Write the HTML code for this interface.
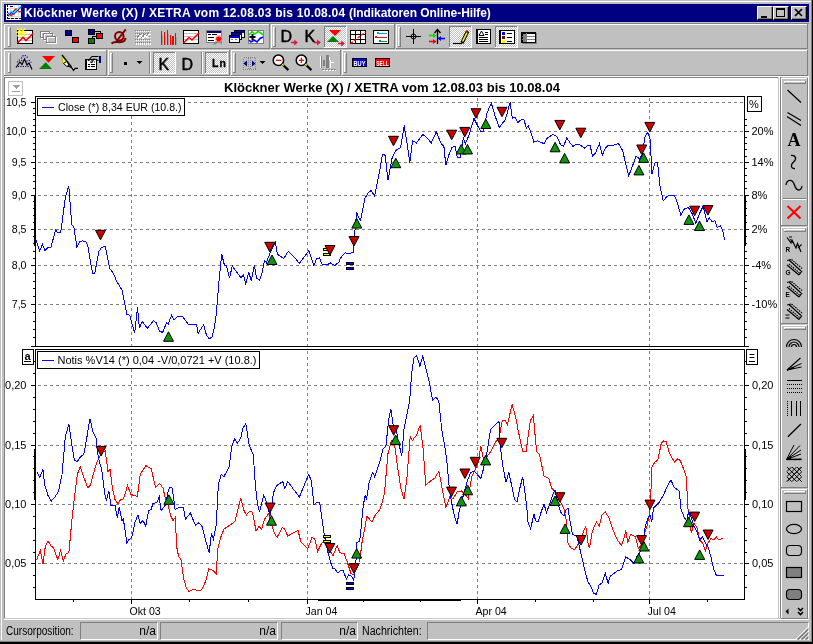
<!DOCTYPE html>
<html lang="de"><head><meta charset="utf-8"><title>Klöckner Werke (X) / XETRA</title>
<style>
html,body{margin:0;padding:0;}
body{width:813px;height:644px;overflow:hidden;background:#c0c0c0;position:relative;font-family:"Liberation Sans",Arial,sans-serif;font-size:11px;color:#000;}
.abs{position:absolute;}
#frame div{position:absolute;}
#title{position:absolute;left:4px;top:4px;width:805px;height:18px;background:#000080;}
#title>span{will-change:transform;position:absolute;left:20px;top:2px;color:#fff;font-weight:bold;font-size:12px;line-height:14px;white-space:nowrap;}
#title .t1{letter-spacing:0.243px;}#title .t2{letter-spacing:-0.06px;}
.tb{position:absolute;top:6px;width:16px;height:14px;background:#c0c0c0;box-sizing:border-box;border:1px solid;border-color:#fff #000 #000 #fff;box-shadow:inset -1px -1px 0 #808080;}
#client{position:absolute;left:4px;top:77px;width:774px;height:541px;background:#fff;border-left:1px solid #808080;border-top:1px solid #808080;box-sizing:border-box;}
#status{will-change:transform;position:absolute;left:4px;top:620px;width:805px;height:21px;}
.sb{position:absolute;top:2px;height:18px;box-sizing:border-box;border:1px solid;border-color:#808080 #fff #fff #808080;text-align:right;padding:2px 1px 0 0;font-size:12px;line-height:13px;}
.sl{position:absolute;top:4px;font-size:12px;line-height:14px;white-space:nowrap;}
svg{position:absolute;left:0;top:0;will-change:transform;}
</style></head><body>
<div id="frame">
<div style="left:0;top:0;width:813px;height:644px;background:#000;"></div>
<div style="left:0;top:0;width:812px;height:642px;background:#808080;"></div>
<div style="left:0;top:0;width:811px;height:641px;background:#c0c0c0;"></div>
<div style="left:1px;top:1px;width:810px;height:1px;background:#fff;"></div>
<div style="left:1px;top:1px;width:1px;height:639px;background:#fff;"></div>
</div>
<div id="title"><span><span class="t1">Klöckner Werke (X) / XETRA vom 12.08.03 bis 10.08.04 </span><span class="t2">(Indikatoren Online-Hilfe)</span></span>
<div class="tb" style="left:753px;top:2px;"></div><div class="tb" style="left:769px;top:2px;"></div><div class="tb" style="left:787px;top:2px;"></div>
</div>
<div id="client"></div>
<div class="abs" style="left:778px;top:77px;width:1px;height:542px;background:#c8c8c8;"></div>
<div class="abs" style="left:779px;top:77px;width:1px;height:542px;background:#fff;"></div>
<div class="abs" style="left:780px;top:77px;width:1px;height:542px;background:#808080;"></div>
<div class="abs" style="left:808px;top:77px;width:1px;height:542px;background:#fff;"></div>
<div class="abs" style="left:4px;top:618px;width:805px;height:1px;background:#c8c8c8;"></div><div class="abs" style="left:4px;top:619px;width:805px;height:1px;background:#fff;"></div>
<div class="abs" style="left:4px;top:76px;width:805px;height:1px;background:#fff;"></div>
<div id="status">
<span class="sl" style="left:2px;transform:scaleX(0.838);transform-origin:0 0;">Cursorposition:</span>
<div class="sb" style="left:76px;width:78px;">n/a</div>
<div class="sb" style="left:156px;width:118px;">n/a</div>
<div class="sb" style="left:277px;width:77px;">n/a</div>
<span class="sl" style="left:358px;transform:scaleX(0.885);transform-origin:0 0;">Nachrichten:</span>
<div class="sb" style="left:423px;width:382px;"></div>
</div>
<svg width="813" height="644" viewBox="0 0 813 644">
<defs><pattern id="chk" width="2" height="2" patternUnits="userSpaceOnUse"><rect width="2" height="2" fill="#c0c0c0"/><rect width="1" height="1" fill="#fff"/><rect x="1" y="1" width="1" height="1" fill="#fff"/></pattern></defs>
<g shape-rendering="crispEdges">
<rect x="4" y="23" width="805" height="1" fill="#808080"/>
<rect x="4" y="24" width="266" height="1" fill="#fff"/><rect x="4" y="24" width="1" height="25" fill="#fff"/><rect x="4" y="48" width="266" height="1" fill="#808080"/><rect x="269" y="24" width="1" height="25" fill="#808080"/>
<rect x="271" y="24" width="124" height="1" fill="#fff"/><rect x="271" y="24" width="1" height="25" fill="#fff"/><rect x="271" y="48" width="124" height="1" fill="#808080"/><rect x="394" y="24" width="1" height="25" fill="#808080"/>
<rect x="396" y="24" width="412" height="1" fill="#fff"/><rect x="396" y="24" width="1" height="25" fill="#fff"/><rect x="396" y="48" width="412" height="1" fill="#808080"/><rect x="807" y="24" width="1" height="25" fill="#808080"/>
<rect x="4" y="50" width="103" height="1" fill="#fff"/><rect x="4" y="50" width="1" height="26" fill="#fff"/><rect x="4" y="75" width="103" height="1" fill="#808080"/><rect x="106" y="50" width="1" height="26" fill="#808080"/>
<rect x="108" y="50" width="122" height="1" fill="#fff"/><rect x="108" y="50" width="1" height="26" fill="#fff"/><rect x="108" y="75" width="122" height="1" fill="#808080"/><rect x="229" y="50" width="1" height="26" fill="#808080"/>
<rect x="231" y="50" width="110" height="1" fill="#fff"/><rect x="231" y="50" width="1" height="26" fill="#fff"/><rect x="231" y="75" width="110" height="1" fill="#808080"/><rect x="340" y="50" width="1" height="26" fill="#808080"/>
<rect x="342" y="50" width="466" height="1" fill="#fff"/><rect x="342" y="50" width="1" height="26" fill="#fff"/><rect x="342" y="75" width="466" height="1" fill="#808080"/><rect x="807" y="50" width="1" height="26" fill="#808080"/>
<rect x="8" y="27" width="1" height="19" fill="#fff"/><rect x="8" y="27" width="2" height="1" fill="#fff"/><rect x="9" y="28" width="1" height="18" fill="#c0c0c0"/><rect x="10" y="27" width="1" height="20" fill="#808080"/><rect x="8" y="46" width="3" height="1" fill="#808080"/>
<rect x="273" y="27" width="1" height="19" fill="#fff"/><rect x="273" y="27" width="2" height="1" fill="#fff"/><rect x="274" y="28" width="1" height="18" fill="#c0c0c0"/><rect x="275" y="27" width="1" height="20" fill="#808080"/><rect x="273" y="46" width="3" height="1" fill="#808080"/>
<rect x="398" y="27" width="1" height="19" fill="#fff"/><rect x="398" y="27" width="2" height="1" fill="#fff"/><rect x="399" y="28" width="1" height="18" fill="#c0c0c0"/><rect x="400" y="27" width="1" height="20" fill="#808080"/><rect x="398" y="46" width="3" height="1" fill="#808080"/>
<rect x="8" y="53" width="1" height="19" fill="#fff"/><rect x="8" y="53" width="2" height="1" fill="#fff"/><rect x="9" y="54" width="1" height="18" fill="#c0c0c0"/><rect x="10" y="53" width="1" height="20" fill="#808080"/><rect x="8" y="72" width="3" height="1" fill="#808080"/>
<rect x="110" y="53" width="1" height="19" fill="#fff"/><rect x="110" y="53" width="2" height="1" fill="#fff"/><rect x="111" y="54" width="1" height="18" fill="#c0c0c0"/><rect x="112" y="53" width="1" height="20" fill="#808080"/><rect x="110" y="72" width="3" height="1" fill="#808080"/>
<rect x="233" y="53" width="1" height="19" fill="#fff"/><rect x="233" y="53" width="2" height="1" fill="#fff"/><rect x="234" y="54" width="1" height="18" fill="#c0c0c0"/><rect x="235" y="53" width="1" height="20" fill="#808080"/><rect x="233" y="72" width="3" height="1" fill="#808080"/>
<rect x="344" y="53" width="1" height="19" fill="#fff"/><rect x="344" y="53" width="2" height="1" fill="#fff"/><rect x="345" y="54" width="1" height="18" fill="#c0c0c0"/><rect x="346" y="53" width="1" height="20" fill="#808080"/><rect x="344" y="72" width="3" height="1" fill="#808080"/>
<rect x="324" y="26" width="23" height="22" fill="url(#chk)"/><rect x="324" y="26" width="23" height="1" fill="#808080"/><rect x="324" y="26" width="1" height="22" fill="#808080"/><rect x="324" y="47" width="23" height="1" fill="#fff"/><rect x="346" y="26" width="1" height="22" fill="#fff"/>
<rect x="449" y="26" width="23" height="22" fill="url(#chk)"/><rect x="449" y="26" width="23" height="1" fill="#808080"/><rect x="449" y="26" width="1" height="22" fill="#808080"/><rect x="449" y="47" width="23" height="1" fill="#fff"/><rect x="471" y="26" width="1" height="22" fill="#fff"/>
<rect x="495" y="26" width="23" height="22" fill="url(#chk)"/><rect x="495" y="26" width="23" height="1" fill="#808080"/><rect x="495" y="26" width="1" height="22" fill="#808080"/><rect x="495" y="47" width="23" height="1" fill="#fff"/><rect x="517" y="26" width="1" height="22" fill="#fff"/>
<rect x="153" y="52" width="23" height="22" fill="url(#chk)"/><rect x="153" y="52" width="23" height="1" fill="#808080"/><rect x="153" y="52" width="1" height="22" fill="#808080"/><rect x="153" y="73" width="23" height="1" fill="#fff"/><rect x="175" y="52" width="1" height="22" fill="#fff"/>
<rect x="205" y="52" width="23" height="22" fill="url(#chk)"/><rect x="205" y="52" width="23" height="1" fill="#808080"/><rect x="205" y="52" width="1" height="22" fill="#808080"/><rect x="205" y="73" width="23" height="1" fill="#fff"/><rect x="227" y="52" width="1" height="22" fill="#fff"/>
<rect x="149" y="52" width="1" height="22" fill="#808080"/><rect x="150" y="52" width="1" height="22" fill="#fff"/>
<rect x="201" y="52" width="1" height="22" fill="#808080"/><rect x="202" y="52" width="1" height="22" fill="#fff"/>
<rect x="17.5" y="30.5" width="15" height="13" fill="#fff" stroke="#000"/>
<rect x="18" y="34" width="14" height="1" fill="#c0c0c0"/><rect x="18" y="37" width="14" height="1" fill="#c0c0c0"/><rect x="18" y="40" width="14" height="1" fill="#c0c0c0"/>
</g>
<polyline points="17.5,43 23,37.5 26,40.5 33,33.5" fill="none" stroke="#ff0000" stroke-width="1.6"/>
<line x1="17.3" y1="28.3" x2="25.3" y2="36.3" stroke="#ffff00" stroke-width="1.5"/><line x1="25.3" y1="28.3" x2="17.3" y2="36.3" stroke="#ffff00" stroke-width="1.5"/><line x1="21.3" y1="27.6" x2="21.3" y2="30.5" stroke="#ffff00" stroke-width="1.3"/><line x1="21.3" y1="34.2" x2="21.3" y2="37" stroke="#ffff00" stroke-width="1.3"/><line x1="16.3" y1="32.3" x2="19.3" y2="32.3" stroke="#ffff00" stroke-width="1.3"/><line x1="23.3" y1="32.3" x2="26.3" y2="32.3" stroke="#ffff00" stroke-width="1.3"/>
<g shape-rendering="crispEdges">
<rect x="40" y="31" width="11" height="8" fill="#c0c0c0"/>
<rect x="41.5" y="32.5" width="9" height="6" fill="none" stroke="#fff"/>
<rect x="40.5" y="31.5" width="9" height="6" fill="none" stroke="#808080"/>
<rect x="43" y="33" width="11" height="8" fill="#c0c0c0"/>
<rect x="44.5" y="34.5" width="9" height="6" fill="none" stroke="#fff"/>
<rect x="43.5" y="33.5" width="9" height="6" fill="none" stroke="#808080"/>
<rect x="46" y="36" width="11" height="8" fill="#c0c0c0"/>
<rect x="47.5" y="37.5" width="9" height="6" fill="none" stroke="#fff"/>
<rect x="46.5" y="36.5" width="9" height="6" fill="none" stroke="#808080"/>
<rect x="65.5" y="30.5" width="6" height="5" fill="#000090" stroke="#000"/>
<rect x="72.5" y="37.5" width="6" height="5" fill="#ff0000" stroke="#000"/>
<polyline points="95,31.5 100.5,31.5 100.5,33" fill="none" stroke="#000" stroke-width="1"/>
<polyline points="97,36.5 92.5,36.5 92.5,38" fill="none" stroke="#000" stroke-width="1"/>
<rect x="88.5" y="29.5" width="6" height="5" fill="#000090" stroke="#000"/>
<rect x="96.5" y="33.5" width="6" height="5" fill="#ff0000" stroke="#000"/>
<rect x="88.5" y="38.5" width="6" height="5" fill="#008000" stroke="#000"/>
</g>
<circle cx="119.3" cy="36.3" r="4.3" fill="none" stroke="#800000" stroke-width="2"/>
<line x1="125.8" y1="29.3" x2="115.5" y2="42.5" stroke="#800000" stroke-width="1.9"/>
<path d="M111.5,43.5 C114,41 118,42.5 121,42 S125,41 125.5,38" fill="none" stroke="#800000" stroke-width="2.1"/>
<g shape-rendering="crispEdges">
<line x1="135" y1="30.5" x2="151" y2="30.5" stroke="#808080" stroke-dasharray="1,1"/>
<line x1="136" y1="31.5" x2="151" y2="31.5" stroke="#fff" stroke-dasharray="1,1"/>
<line x1="135" y1="33.5" x2="151" y2="33.5" stroke="#808080" stroke-dasharray="1,1"/>
<line x1="136" y1="34.5" x2="151" y2="34.5" stroke="#fff" stroke-dasharray="1,1"/>
<line x1="135" y1="36.5" x2="151" y2="36.5" stroke="#808080" stroke-dasharray="1,1"/>
<line x1="136" y1="37.5" x2="151" y2="37.5" stroke="#fff" stroke-dasharray="1,1"/>
<line x1="135" y1="39.5" x2="151" y2="39.5" stroke="#808080" stroke-dasharray="1,1"/>
<line x1="136" y1="40.5" x2="151" y2="40.5" stroke="#fff" stroke-dasharray="1,1"/>
<line x1="135" y1="42.5" x2="151" y2="42.5" stroke="#808080" stroke-dasharray="1,1"/>
<line x1="136" y1="43.5" x2="151" y2="43.5" stroke="#fff" stroke-dasharray="1,1"/>
<polyline points="137,38 140,34 142,38 144,34 146,37 149,32" fill="none" stroke="#808080" stroke-width="1"/>
<polyline points="138,39 141,35 143,39 145,35 147,38 150,33" fill="none" stroke="#fff" stroke-width="1"/>
<line x1="136" y1="44.5" x2="151" y2="44.5" stroke="#fff" stroke-dasharray="1,1"/>
<rect x="161" y="31" width="1.4" height="14" fill="#ff0000"/>
<rect x="162.4" y="35" width="0.6" height="10" fill="#a0a0a0"/>
<rect x="164" y="32" width="1.4" height="13" fill="#ff0000"/>
<rect x="165.4" y="36" width="0.6" height="9" fill="#a0a0a0"/>
<rect x="167" y="30" width="1.4" height="15" fill="#ff0000"/>
<rect x="168.4" y="34" width="0.6" height="11" fill="#a0a0a0"/>
<rect x="169.8" y="35" width="1.4" height="10" fill="#ff0000"/>
<rect x="171.2" y="39" width="0.6" height="6" fill="#a0a0a0"/>
<rect x="172.3" y="36" width="1.4" height="9" fill="#ff0000"/>
<rect x="173.7" y="40" width="0.6" height="5" fill="#a0a0a0"/>
<rect x="174.5" y="33" width="1.4" height="12" fill="#ff0000"/>
<rect x="175.9" y="37" width="0.6" height="8" fill="#a0a0a0"/>
<rect x="183.5" y="30.5" width="15" height="13" fill="#fff" stroke="#000"/>
<rect x="184" y="33" width="14" height="1" fill="#c0c0c0"/><rect x="184" y="36" width="14" height="1" fill="#c0c0c0"/><rect x="184" y="39" width="14" height="1" fill="#c0c0c0"/>
</g>
<polyline points="183.5,43 189,37.5 192,40 199,33" fill="none" stroke="#ff0000" stroke-width="1.6"/>
<g shape-rendering="crispEdges">
<rect x="206.5" y="30.5" width="15" height="12" fill="#fff" stroke="#808080"/>
<rect x="207" y="31" width="14" height="2" fill="#000080"/>
<rect x="208" y="34" width="3" height="1" fill="#000"/><rect x="212" y="34" width="5" height="1" fill="#000"/><rect x="208" y="37" width="6" height="1" fill="#000"/><rect x="208" y="40" width="6" height="1" fill="#000"/>
</g>
<polygon points="216,41 213,45 216,44 218.5,42 221,44 222,45 221,41" fill="#808080" stroke="none"/>
<circle cx="218.7" cy="38.8" r="2.6" fill="#ff0000"/><circle cx="218.7" cy="38.8" r="3.4" fill="none" stroke="#ff9090" stroke-width="0.8"/>
<g shape-rendering="crispEdges">
<rect x="234.5" y="30.5" width="10" height="7" fill="#fff" stroke="#000"/>
<rect x="235" y="31" width="9" height="2" fill="#0000c0"/>
<rect x="231.5" y="32.5" width="10" height="7" fill="#fff" stroke="#000"/>
<rect x="232" y="33" width="9" height="2" fill="#0000c0"/>
<rect x="229.5" y="35.5" width="10" height="7" fill="#fff" stroke="#000"/>
<rect x="230" y="36" width="9" height="2" fill="#0000c0"/>
<rect x="231" y="39" width="2" height="1" fill="#808080"/><rect x="235" y="39" width="2" height="1" fill="#808080"/>
<rect x="248.5" y="30.5" width="15" height="13" fill="#fff" stroke="#808080"/>
</g>
<polyline points="249,35 252,31.5 255,34 258,31.5 261,33 263,35" fill="none" stroke="#00e000" stroke-width="1.6"/>
<polyline points="249,40 251,42 254,40 257,42 260,38.5 263,37" fill="none" stroke="#0000ff" stroke-width="1.6"/>
<rect x="249.5" y="36" width="6" height="2" fill="#000"/><rect x="251.5" y="34" width="2" height="6" fill="#000"/>
<text x="280.5" y="42" font-family="Liberation Sans, Arial, sans-serif" font-size="16px" fill="#000" stroke="#000" stroke-width="0.45">D</text>
<text x="304.5" y="42" font-family="Liberation Sans, Arial, sans-serif" font-size="16px" fill="#000" stroke="#000" stroke-width="0.45">K</text>
<line x1="291" y1="42.5" x2="296" y2="42.5" stroke="#dc143c" stroke-width="1.6"/><polygon points="294.2,39.5 297.8,42.5 294.2,45.5" fill="#dc143c" stroke="none"/>
<line x1="314" y1="42.5" x2="319" y2="42.5" stroke="#dc143c" stroke-width="1.6"/><polygon points="317.2,39.5 320.8,42.5 317.2,45.5" fill="#dc143c" stroke="none"/>
<polygon points="329,30 341,30 335,36" fill="#ff0000" stroke="none"/>
<polygon points="327,42 339,42 333,36" fill="#008000" stroke="none"/>
<line x1="338" y1="43.5" x2="343" y2="43.5" stroke="#dc143c" stroke-width="1.6"/><polygon points="341.2,40.5 344.8,43.5 341.2,46.5" fill="#dc143c" stroke="none"/>
<g shape-rendering="crispEdges">
<rect x="350.5" y="30.5" width="15" height="13" fill="#fff" stroke="#000"/>
<rect x="355" y="30" width="1" height="14" fill="#000"/><rect x="360" y="30" width="1" height="14" fill="#000"/><rect x="350" y="34" width="16" height="1" fill="#000"/><rect x="350" y="39" width="16" height="1" fill="#000"/>
</g>
<line x1="350.5" y1="43.5" x2="365.5" y2="32" stroke="#ff0000" stroke-width="1.3" stroke-dasharray="3,1.5"/>
<g shape-rendering="crispEdges">
<rect x="373.5" y="30.5" width="15" height="13" fill="#fff" stroke="#000"/>
<rect x="378" y="33" width="9" height="1" fill="#00a0e0"/><rect x="377" y="32" width="2" height="2" fill="#00a0e0"/>
<rect x="376" y="37" width="11" height="1" fill="#dc143c"/><rect x="375" y="36" width="2" height="2" fill="#dc143c"/>
<rect x="380" y="41" width="7" height="1" fill="#00a040"/><rect x="379" y="40" width="2" height="2" fill="#00a040"/>
<rect x="406" y="36" width="15" height="1" fill="#000"/><rect x="413" y="29" width="1" height="15" fill="#000"/>
</g>
<circle cx="413.5" cy="36.5" r="2.5" fill="none" stroke="#000" stroke-width="1"/>
<line x1="437.5" y1="29.5" x2="437.5" y2="44" stroke="#000" stroke-width="1.3"/><polyline points="434.5,33 437.5,29.5 440.5,33" fill="none" stroke="#000" stroke-width="1.3"/>
<line x1="429" y1="35.5" x2="435" y2="35.5" stroke="#00e000" stroke-width="1.6"/><polygon points="433,33 436.5,35.5 433,38" fill="#00e000" stroke="none"/>
<line x1="429" y1="41.5" x2="435" y2="41.5" stroke="#ff0000" stroke-width="1.6"/><polygon points="433,39 436.5,41.5 433,44" fill="#ff0000" stroke="none"/>
<line x1="445" y1="38.5" x2="439" y2="38.5" stroke="#0000ff" stroke-width="1.6"/><polygon points="441,36 437.5,38.5 441,41" fill="#0000ff" stroke="none"/>
<line x1="453" y1="43.5" x2="462" y2="43.5" stroke="#000" stroke-width="1.2"/>
<line x1="462" y1="43" x2="467.5" y2="31.5" stroke="#000" stroke-width="3.6"/>
<line x1="462.6" y1="41.5" x2="467" y2="32.5" stroke="#ffff00" stroke-width="1.6"/>
<line x1="466.6" y1="32.2" x2="467.8" y2="30.8" stroke="#c00000" stroke-width="2.5"/>
<g shape-rendering="crispEdges">
<rect x="476.5" y="29.5" width="14" height="14" fill="#fff" stroke="#000"/>
<rect x="476" y="29" width="1.5" height="15" fill="#000"/><rect x="476" y="42.5" width="15" height="1.5" fill="#000"/>
<rect x="479" y="37" width="9" height="1" fill="#000"/><rect x="479" y="39" width="9" height="1" fill="#000"/><rect x="479" y="41" width="9" height="1" fill="#000"/><rect x="485" y="32" width="3" height="1" fill="#000"/><rect x="485" y="34" width="3" height="1" fill="#000"/>
</g>
<polygon points="479,35.5 481.5,31 484,35.5" fill="none" stroke="#000"/>
<g shape-rendering="crispEdges">
<rect x="499.5" y="30.5" width="15" height="13" fill="#fff" stroke="#000"/>
<rect x="499" y="30" width="1.5" height="14" fill="#000"/><rect x="499" y="42.5" width="16" height="1.5" fill="#000"/>
<rect x="502" y="32" width="3" height="3" fill="#0000ff"/><rect x="502" y="36" width="3" height="3" fill="#800000"/><rect x="502" y="40" width="3" height="3" fill="#ffff00"/>
<rect x="507" y="33" width="5" height="1" fill="#000"/><rect x="507" y="37" width="5" height="1" fill="#000"/><rect x="507" y="41" width="5" height="1" fill="#000"/>
<rect x="522" y="33" width="15" height="11" fill="#808080"/>
<rect x="521.5" y="32.5" width="14" height="10" fill="#fff" stroke="#000"/>
<rect x="521" y="32" width="1.5" height="11" fill="#000"/><rect x="521" y="32" width="15" height="1.5" fill="#000"/>
<rect x="522" y="36" width="13" height="1" fill="#808080"/><rect x="522" y="39" width="13" height="1" fill="#808080"/><rect x="526" y="33" width="1" height="9" fill="#808080"/>
<rect x="523" y="34" width="3" height="2" fill="#808080"/><rect x="523" y="37" width="3" height="2" fill="#808080"/><rect x="523" y="40" width="3" height="2" fill="#808080"/>
</g>
<polyline points="16,67.5 20,62 22,64.5 24.5,59 27,65 29,63 32,69.5" fill="none" stroke="#000" stroke-width="1.2"/>
<g fill="none" stroke="#0000c0" stroke-width="1.2" stroke-dasharray="1.2,1.2"><path d="M21.5,58.5 A3,3 0 0 1 27.5,58.5"/><path d="M17.5,62.5 A2.5,2.5 0 0 1 22,61"/><path d="M26.5,61.5 A2.5,2.5 0 0 1 31,62.5"/><line x1="18" y1="66.5" x2="30" y2="66.5"/></g>
<polygon points="42,56 55,56 48.5,62.8" fill="#ff0000" stroke="none"/>
<polygon points="39,69 52,69 45.7,62.3" fill="#008000" stroke="none"/>
<polygon points="62,55 66.5,61.5 63,63.5" fill="#ffff00" stroke="#c0c000"/>
<line x1="62" y1="55" x2="71.5" y2="67" stroke="#000" stroke-width="1.3"/>
<polygon points="63.5,63.5 66.5,61.5 69,65 67,66.5" fill="#fff" stroke="#000"/>
<polyline points="67.5,66 71.5,67.5 73.5,70.5 75,68.3 78,68.3" fill="none" stroke="#000" stroke-width="1.2"/>
<g shape-rendering="crispEdges">
<rect x="85.5" y="59.5" width="11" height="10" fill="#fff" stroke="#000"/>
<rect x="85" y="59" width="1.5" height="11" fill="#000"/><rect x="85" y="68.5" width="12" height="1.5" fill="#000"/><rect x="95.5" y="59" width="1.5" height="11" fill="#000"/>
<rect x="88" y="64" width="2" height="1" fill="#000"/><rect x="91" y="64" width="4" height="1" fill="#000"/><rect x="88" y="66" width="2" height="1" fill="#000"/><rect x="91" y="66" width="4" height="1" fill="#000"/>
<rect x="99" y="56" width="2" height="7" fill="#000090"/>
</g>
<polyline points="88,61 92,56.5 98.5,56.5" fill="none" stroke="#000" stroke-width="1.1"/><polyline points="91,63 94,59 98.5,60.5" fill="none" stroke="#000" stroke-width="1.1"/>
<line x1="89" y1="60" x2="95" y2="60" stroke="#000" stroke-dasharray="1,1"/><line x1="90" y1="62" x2="95" y2="62" stroke="#000" stroke-dasharray="1,1"/>
<rect x="124" y="62" width="3" height="3" fill="#000"/>
<polygon points="136.5,61 142.5,61 139.5,64" fill="#000" stroke="none"/>
<text x="158.5" y="70" font-family="Liberation Sans, Arial, sans-serif" font-size="16px" fill="#000" stroke="#000" stroke-width="0.45">K</text>
<text x="181.5" y="70" font-family="Liberation Sans, Arial, sans-serif" font-size="16px" fill="#000" stroke="#000" stroke-width="0.45">D</text>
<text x="212" y="67.3" font-family="Liberation Sans, Arial, sans-serif" font-weight="bold" font-size="10.5px" fill="#000" stroke="#000" stroke-width="0.3" letter-spacing="1.2">Ln</text>
<g shape-rendering="crispEdges">
<rect x="243.5" y="57.5" width="12" height="12" fill="none" stroke="#808080" stroke-dasharray="1,1"/>
<line x1="248.5" y1="58" x2="248.5" y2="69" stroke="#808080" stroke-dasharray="1,1"/><line x1="250.5" y1="58" x2="250.5" y2="69" stroke="#808080" stroke-dasharray="1,1"/>
</g>
<polygon points="243.5,63.5 247,60.5 247,66.5" fill="#000090" stroke="none"/><polygon points="255.5,63.5 252,60.5 252,66.5" fill="#000090" stroke="none"/>
<polygon points="259.5,61 265.5,61 262.5,64" fill="#000" stroke="none"/>
<circle cx="278.4" cy="60.3" r="5.2" fill="#fff" stroke="#000" stroke-width="1.5"/><line x1="275.7" y1="60.3" x2="281.1" y2="60.3" stroke="#ff0000" stroke-width="1.3"/><line x1="282.4" y1="64.3" x2="288.4" y2="70.1" stroke="#000" stroke-width="2.2"/><line x1="282.2" y1="64.1" x2="283.7" y2="65.5" stroke="#ffff00" stroke-width="1.5"/>
<circle cx="301.4" cy="60.3" r="5.2" fill="#fff" stroke="#000" stroke-width="1.5"/><line x1="298.7" y1="60.3" x2="304.1" y2="60.3" stroke="#ff0000" stroke-width="1.3"/><line x1="301.4" y1="57.6" x2="301.4" y2="63" stroke="#ff0000" stroke-width="1.3"/><line x1="305.4" y1="64.3" x2="311.4" y2="70.1" stroke="#000" stroke-width="2.2"/><line x1="305.2" y1="64.1" x2="306.7" y2="65.5" stroke="#ffff00" stroke-width="1.5"/>
<g shape-rendering="crispEdges">
<rect x="326" y="55" width="3" height="13" fill="#808080"/>
<rect x="321" y="56" width="1" height="12" fill="#808080"/><rect x="320" y="56" width="1" height="12" fill="#fff"/>
<rect x="323" y="60" width="2" height="6" fill="#808080"/><rect x="330" y="60" width="1" height="8" fill="#fff"/><rect x="331" y="62" width="3" height="1" fill="#fff"/><rect x="329" y="57" width="1" height="3" fill="#fff"/>
<line x1="322" y1="69.5" x2="336" y2="69.5" stroke="#808080" stroke-dasharray="2,1"/><line x1="323" y1="70.5" x2="336" y2="70.5" stroke="#fff" stroke-dasharray="2,1"/>
<rect x="352.5" y="58.5" width="14" height="8" fill="#0000ff" stroke="#000"/>
<rect x="375.5" y="58.5" width="14" height="8" fill="#ff0000" stroke="#000"/>
</g>
<text x="359.5" y="65.6" text-anchor="middle" font-family="Liberation Sans, Arial, sans-serif" font-size="7px" font-weight="bold" fill="#fff" textLength="12" lengthAdjust="spacingAndGlyphs">BUY</text>
<text x="382.5" y="65.6" text-anchor="middle" font-family="Liberation Sans, Arial, sans-serif" font-size="7px" font-weight="bold" fill="#fff" textLength="12.5" lengthAdjust="spacingAndGlyphs">SELL</text>
<g shape-rendering="crispEdges">
<rect x="781" y="78" width="27" height="1" fill="#fff"/><rect x="781" y="78" width="1" height="148" fill="#fff"/><rect x="781" y="225" width="27" height="1" fill="#808080"/><rect x="807" y="78" width="1" height="148" fill="#808080"/>
<rect x="781" y="227" width="27" height="1" fill="#fff"/><rect x="781" y="227" width="1" height="97" fill="#fff"/><rect x="781" y="323" width="27" height="1" fill="#808080"/><rect x="807" y="227" width="1" height="97" fill="#808080"/>
<rect x="781" y="325" width="27" height="1" fill="#fff"/><rect x="781" y="325" width="1" height="163" fill="#fff"/><rect x="781" y="487" width="27" height="1" fill="#808080"/><rect x="807" y="325" width="1" height="163" fill="#808080"/>
<rect x="781" y="489" width="27" height="1" fill="#fff"/><rect x="781" y="489" width="1" height="130" fill="#fff"/><rect x="781" y="618" width="27" height="1" fill="#808080"/><rect x="807" y="489" width="1" height="130" fill="#808080"/>
<rect x="784" y="81" width="21" height="1" fill="#fff"/><rect x="784" y="82" width="1" height="1" fill="#fff"/><rect x="785" y="82" width="20" height="1" fill="#c0c0c0"/><rect x="784" y="83" width="22" height="1" fill="#808080"/><rect x="805" y="81" width="1" height="2" fill="#808080"/>
<rect x="784" y="229" width="21" height="1" fill="#fff"/><rect x="784" y="230" width="1" height="1" fill="#fff"/><rect x="785" y="230" width="20" height="1" fill="#c0c0c0"/><rect x="784" y="231" width="22" height="1" fill="#808080"/><rect x="805" y="229" width="1" height="2" fill="#808080"/>
<rect x="784" y="327" width="21" height="1" fill="#fff"/><rect x="784" y="328" width="1" height="1" fill="#fff"/><rect x="785" y="328" width="20" height="1" fill="#c0c0c0"/><rect x="784" y="329" width="22" height="1" fill="#808080"/><rect x="805" y="327" width="1" height="2" fill="#808080"/>
<rect x="784" y="491" width="21" height="1" fill="#fff"/><rect x="784" y="492" width="1" height="1" fill="#fff"/><rect x="785" y="492" width="20" height="1" fill="#c0c0c0"/><rect x="784" y="493" width="22" height="1" fill="#808080"/><rect x="805" y="491" width="1" height="2" fill="#808080"/>
<rect x="783" y="198" width="23" height="1" fill="#808080"/><rect x="783" y="199" width="23" height="1" fill="#fff"/>
</g>
<line x1="787.5" y1="90" x2="801" y2="102.5" stroke="#000" stroke-width="1.3"/>
<line x1="787.5" y1="112.5" x2="801" y2="120.5" stroke="#000" stroke-width="1.3"/><line x1="787" y1="116.5" x2="801" y2="125.5" stroke="#000" stroke-width="1.3"/>
<text x="794" y="146" text-anchor="middle" font-family="Liberation Serif, serif" font-weight="bold" font-size="18px" fill="#000">A</text>
<path d="M791,155.5 C796,155 797,159 793.5,162 C790,165 791,169 795,168.5" fill="none" stroke="#000" stroke-width="1.3"/>
<path d="M786,185 C787,179 792.5,178.5 794.5,185 C796.5,191.5 801,191.5 802,186" fill="none" stroke="#000" stroke-width="1.3"/>
<line x1="787.5" y1="206" x2="800.5" y2="218.5" stroke="#ff0000" stroke-width="2"/><line x1="800.5" y1="206" x2="787.5" y2="218.5" stroke="#ff0000" stroke-width="2"/>
<polyline points="787,237.5 791,243 792,240 796,248 797.5,243.5 801,252" fill="none" stroke="#000" stroke-width="1.2"/><line x1="789" y1="237" x2="792" y2="237" stroke="#000" stroke-width="1"/><line x1="798" y1="248" x2="801.5" y2="244.5" stroke="#000" stroke-width="1.1"/><line x1="790" y1="239" x2="793" y2="243" stroke="#000" stroke-width="1"/>
<text x="785.5" y="252" font-family="Liberation Sans, Arial, sans-serif" font-size="6.5px" font-weight="bold" fill="#000">R</text>
<line x1="789" y1="260" x2="801" y2="271" stroke="#000" stroke-width="1.2"/><line x1="787" y1="265" x2="799" y2="275" stroke="#000" stroke-width="1.2"/><line x1="791.5" y1="259.5" x2="802" y2="268.5" stroke="#000" stroke-width="1.2" stroke-dasharray="1.5,1"/><line x1="789" y1="264" x2="800" y2="273.5" stroke="#000" stroke-width="1.2" stroke-dasharray="1.5,1"/><line x1="787" y1="260.5" x2="791" y2="259.5" stroke="#000" stroke-width="1"/><line x1="799" y1="275" x2="802" y2="271" stroke="#000" stroke-width="1.2"/><text x="785.5" y="275" font-family="Liberation Sans, Arial, sans-serif" font-size="6.5px" font-weight="bold" fill="#000">G</text>
<line x1="789" y1="282" x2="801" y2="293" stroke="#000" stroke-width="1.2"/><line x1="787" y1="287" x2="799" y2="297" stroke="#000" stroke-width="1.2"/><line x1="791.5" y1="281.5" x2="802" y2="290.5" stroke="#000" stroke-width="1.2" stroke-dasharray="1.5,1"/><line x1="789" y1="286" x2="800" y2="295.5" stroke="#000" stroke-width="1.2" stroke-dasharray="1.5,1"/><line x1="787" y1="282.5" x2="791" y2="281.5" stroke="#000" stroke-width="1"/><line x1="799" y1="297" x2="802" y2="293" stroke="#000" stroke-width="1.2"/><text x="785.5" y="297" font-family="Liberation Sans, Arial, sans-serif" font-size="6.5px" font-weight="bold" fill="#000">E</text>
<line x1="789" y1="304.5" x2="801" y2="315.5" stroke="#000" stroke-width="1.2"/><line x1="787" y1="309.5" x2="799" y2="319.5" stroke="#000" stroke-width="1.2"/><line x1="791.5" y1="304" x2="802" y2="313" stroke="#000" stroke-width="1.2" stroke-dasharray="1.5,1"/><line x1="789" y1="308.5" x2="800" y2="318" stroke="#000" stroke-width="1.2" stroke-dasharray="1.5,1"/><line x1="787" y1="305" x2="791" y2="304" stroke="#000" stroke-width="1"/><line x1="799" y1="319.5" x2="802" y2="315.5" stroke="#000" stroke-width="1.2"/><line x1="785.5" y1="315" x2="789.5" y2="315" stroke="#000" stroke-width="1"/><line x1="785.5" y1="318" x2="789.5" y2="318" stroke="#000" stroke-width="1"/>
<g fill="none" stroke="#000" stroke-width="1.2"><path d="M786.5,347 A7.5,7.5 0 0 1 801.5,347"/><path d="M789,347 A5,5 0 0 1 799,347"/><path d="M791.5,347 A2.5,2.5 0 0 1 796.5,347"/></g>
<line x1="787" y1="370" x2="800.5" y2="358" stroke="#000" stroke-width="1.2"/><line x1="787" y1="370" x2="801.5" y2="363.5" stroke="#000" stroke-width="1"/><line x1="787" y1="370" x2="801.5" y2="367" stroke="#000" stroke-width="1"/><line x1="787" y1="370" x2="794" y2="367.5" stroke="#000" stroke-width="1.6"/>
<g shape-rendering="crispEdges">
<rect x="787" y="380" width="15" height="1.4" fill="#000"/>
<line x1="787" y1="384.5" x2="802" y2="384.5" stroke="#000" stroke-dasharray="1,1"/>
<line x1="787" y1="388.5" x2="802" y2="388.5" stroke="#000" stroke-dasharray="1,1"/>
<line x1="787" y1="392.5" x2="802" y2="392.5" stroke="#000" stroke-dasharray="1,1"/>
<line x1="787.5" y1="401" x2="787.5" y2="416" stroke="#000" stroke-dasharray="1,1"/>
<rect x="791" y="401" width="1.2" height="15" fill="#000"/><rect x="795.5" y="401" width="1.2" height="15" fill="#000"/><rect x="800" y="401" width="1.2" height="15" fill="#000"/>
</g>
<line x1="787.9" y1="436.7" x2="800.9" y2="424" stroke="#000" stroke-width="1.3"/>
<line x1="786.5" y1="459.5" x2="801.5" y2="459" stroke="#000" stroke-width="1"/>
<line x1="786.5" y1="459.5" x2="801" y2="454" stroke="#000" stroke-width="1"/>
<line x1="786.5" y1="459.5" x2="801" y2="450" stroke="#000" stroke-width="1"/>
<line x1="786.5" y1="459.5" x2="800" y2="445.5" stroke="#000" stroke-width="1"/>
<line x1="786.5" y1="459.5" x2="794" y2="445" stroke="#000" stroke-width="1"/>
<line x1="786.5" y1="459.5" x2="801.5" y2="459.5" stroke="#000" stroke-width="1.3"/>
<polygon points="786.5,459.5 791,455 791,459.5" fill="#000" stroke="none"/>
<line x1="787" y1="467.5" x2="787" y2="467.5" stroke="#000" stroke-width="1"/>
<line x1="792" y1="467.5" x2="792" y2="467.5" stroke="#000" stroke-width="1"/>
<line x1="797" y1="467.5" x2="797" y2="467.5" stroke="#000" stroke-width="1"/>
<line x1="802" y1="467.5" x2="802" y2="467.5" stroke="#000" stroke-width="1"/>
<line x1="787" y1="467" x2="801.5" y2="481.5" stroke="#000" stroke-width="1"/>
<line x1="787" y1="467" x2="801.5" y2="481.5" stroke="#000" stroke-width="1"/>
<line x1="801.5" y1="467" x2="787" y2="481.5" stroke="#000" stroke-width="1"/>
<line x1="801.5" y1="467" x2="787" y2="481.5" stroke="#000" stroke-width="1"/>
<line x1="792" y1="467" x2="801.5" y2="476.5" stroke="#000" stroke-width="1"/>
<line x1="787" y1="472" x2="796.5" y2="481.5" stroke="#000" stroke-width="1"/>
<line x1="796.5" y1="467" x2="787" y2="476.5" stroke="#000" stroke-width="1"/>
<line x1="801.5" y1="472" x2="792" y2="481.5" stroke="#000" stroke-width="1"/>
<line x1="797" y1="467" x2="801.5" y2="471.5" stroke="#000" stroke-width="1"/>
<line x1="787" y1="477" x2="791.5" y2="481.5" stroke="#000" stroke-width="1"/>
<line x1="791.5" y1="467" x2="787" y2="471.5" stroke="#000" stroke-width="1"/>
<line x1="801.5" y1="477" x2="797" y2="481.5" stroke="#000" stroke-width="1"/>
<rect x="786.5" y="501.5" width="15" height="10" fill="none" stroke="#000" stroke-width="1.2"/>
<ellipse cx="794" cy="529" rx="7.5" ry="4.6" fill="none" stroke="#000" stroke-width="1.2"/>
<rect x="786.5" y="545.5" width="15" height="10" rx="3.5" fill="none" stroke="#000" stroke-width="1.2"/>
<rect x="786.5" y="567.5" width="15" height="10" fill="#808080" stroke="#000" stroke-width="1.2"/>
<rect x="786.5" y="589.5" width="15" height="10" rx="3.5" fill="#808080" stroke="#000" stroke-width="1.2"/>
<polygon points="785.5,611.5 788.5,608.5 788.5,614.5" fill="#000" stroke="none"/>
<polyline points="798,608 800.5,610.5 803,608" fill="none" stroke="#000" stroke-width="1.6"/><polyline points="798,612 800.5,614.5 803,612" fill="none" stroke="#000" stroke-width="1.6"/>
<g shape-rendering="crispEdges">
<line x1="36" y1="102.5" x2="744" y2="102.5" stroke="#808080" stroke-dasharray="3,3" stroke-dashoffset="-2"/>
<line x1="36" y1="131.5" x2="744" y2="131.5" stroke="#808080" stroke-dasharray="3,3" stroke-dashoffset="-2"/>
<line x1="36" y1="162.5" x2="744" y2="162.5" stroke="#808080" stroke-dasharray="3,3" stroke-dashoffset="-2"/>
<line x1="36" y1="195.5" x2="744" y2="195.5" stroke="#808080" stroke-dasharray="3,3" stroke-dashoffset="-2"/>
<line x1="36" y1="229.5" x2="744" y2="229.5" stroke="#808080" stroke-dasharray="3,3" stroke-dashoffset="-2"/>
<line x1="36" y1="265.5" x2="744" y2="265.5" stroke="#808080" stroke-dasharray="3,3" stroke-dashoffset="-2"/>
<line x1="36" y1="304.5" x2="744" y2="304.5" stroke="#808080" stroke-dasharray="3,3" stroke-dashoffset="-2"/>
<line x1="36" y1="385.5" x2="744" y2="385.5" stroke="#808080" stroke-dasharray="3,3" stroke-dashoffset="-2"/>
<line x1="36" y1="445.5" x2="744" y2="445.5" stroke="#808080" stroke-dasharray="3,3" stroke-dashoffset="-2"/>
<line x1="36" y1="504.5" x2="744" y2="504.5" stroke="#808080" stroke-dasharray="3,3" stroke-dashoffset="-2"/>
<line x1="36" y1="563.5" x2="744" y2="563.5" stroke="#808080" stroke-dasharray="3,3" stroke-dashoffset="-2"/>
<line x1="131.5" y1="97" x2="131.5" y2="346" stroke="#808080" stroke-dasharray="3,3" stroke-dashoffset="-1"/>
<line x1="131.5" y1="350" x2="131.5" y2="599" stroke="#808080" stroke-dasharray="3,3" stroke-dashoffset="-1"/>
<line x1="307.5" y1="97" x2="307.5" y2="346" stroke="#808080" stroke-dasharray="3,3" stroke-dashoffset="-1"/>
<line x1="307.5" y1="350" x2="307.5" y2="599" stroke="#808080" stroke-dasharray="3,3" stroke-dashoffset="-1"/>
<line x1="477.5" y1="97" x2="477.5" y2="346" stroke="#808080" stroke-dasharray="3,3" stroke-dashoffset="-1"/>
<line x1="477.5" y1="350" x2="477.5" y2="599" stroke="#808080" stroke-dasharray="3,3" stroke-dashoffset="-1"/>
<line x1="649.5" y1="97" x2="649.5" y2="346" stroke="#808080" stroke-dasharray="3,3" stroke-dashoffset="-1"/>
<line x1="649.5" y1="350" x2="649.5" y2="599" stroke="#808080" stroke-dasharray="3,3" stroke-dashoffset="-1"/>
<rect x="35" y="96" width="710" height="1" fill="#000"/>
<rect x="35" y="346" width="710" height="1" fill="#000"/>
<rect x="35" y="96" width="1" height="251" fill="#000"/>
<rect x="744" y="96" width="1" height="251" fill="#000"/>
<rect x="35" y="349" width="710" height="1" fill="#000"/>
<rect x="35" y="599" width="710" height="1" fill="#000"/>
<rect x="35" y="349" width="1" height="251" fill="#000"/>
<rect x="744" y="349" width="1" height="251" fill="#000"/>
<rect x="34" y="195" width="2" height="51" fill="#000"/>
<rect x="744" y="195" width="2" height="51" fill="#000"/>
<rect x="34" y="449" width="2" height="51" fill="#000"/>
<rect x="744" y="449" width="2" height="51" fill="#000"/>
<rect x="318" y="599" width="143" height="2" fill="#000"/>
<rect x="33" y="337" width="3" height="1" fill="#000"/>
<rect x="744" y="337" width="3" height="1" fill="#000"/>
<rect x="33" y="329" width="3" height="1" fill="#000"/>
<rect x="744" y="329" width="3" height="1" fill="#000"/>
<rect x="33" y="321" width="3" height="1" fill="#000"/>
<rect x="744" y="321" width="3" height="1" fill="#000"/>
<rect x="33" y="312" width="3" height="1" fill="#000"/>
<rect x="744" y="312" width="3" height="1" fill="#000"/>
<rect x="31" y="304" width="5" height="1" fill="#000"/>
<rect x="744" y="304" width="5" height="1" fill="#000"/>
<rect x="33" y="296" width="3" height="1" fill="#000"/>
<rect x="744" y="296" width="3" height="1" fill="#000"/>
<rect x="33" y="288" width="3" height="1" fill="#000"/>
<rect x="744" y="288" width="3" height="1" fill="#000"/>
<rect x="33" y="281" width="3" height="1" fill="#000"/>
<rect x="744" y="281" width="3" height="1" fill="#000"/>
<rect x="33" y="273" width="3" height="1" fill="#000"/>
<rect x="744" y="273" width="3" height="1" fill="#000"/>
<rect x="31" y="265" width="5" height="1" fill="#000"/>
<rect x="744" y="265" width="5" height="1" fill="#000"/>
<rect x="33" y="258" width="3" height="1" fill="#000"/>
<rect x="744" y="258" width="3" height="1" fill="#000"/>
<rect x="33" y="251" width="3" height="1" fill="#000"/>
<rect x="744" y="251" width="3" height="1" fill="#000"/>
<rect x="33" y="243" width="3" height="1" fill="#000"/>
<rect x="744" y="243" width="3" height="1" fill="#000"/>
<rect x="33" y="236" width="3" height="1" fill="#000"/>
<rect x="744" y="236" width="3" height="1" fill="#000"/>
<rect x="31" y="229" width="5" height="1" fill="#000"/>
<rect x="744" y="229" width="5" height="1" fill="#000"/>
<rect x="33" y="222" width="3" height="1" fill="#000"/>
<rect x="744" y="222" width="3" height="1" fill="#000"/>
<rect x="33" y="215" width="3" height="1" fill="#000"/>
<rect x="744" y="215" width="3" height="1" fill="#000"/>
<rect x="33" y="208" width="3" height="1" fill="#000"/>
<rect x="744" y="208" width="3" height="1" fill="#000"/>
<rect x="33" y="201" width="3" height="1" fill="#000"/>
<rect x="744" y="201" width="3" height="1" fill="#000"/>
<rect x="31" y="195" width="5" height="1" fill="#000"/>
<rect x="744" y="195" width="5" height="1" fill="#000"/>
<rect x="33" y="188" width="3" height="1" fill="#000"/>
<rect x="744" y="188" width="3" height="1" fill="#000"/>
<rect x="33" y="181" width="3" height="1" fill="#000"/>
<rect x="744" y="181" width="3" height="1" fill="#000"/>
<rect x="33" y="175" width="3" height="1" fill="#000"/>
<rect x="744" y="175" width="3" height="1" fill="#000"/>
<rect x="33" y="168" width="3" height="1" fill="#000"/>
<rect x="744" y="168" width="3" height="1" fill="#000"/>
<rect x="31" y="162" width="5" height="1" fill="#000"/>
<rect x="744" y="162" width="5" height="1" fill="#000"/>
<rect x="33" y="156" width="3" height="1" fill="#000"/>
<rect x="744" y="156" width="3" height="1" fill="#000"/>
<rect x="33" y="149" width="3" height="1" fill="#000"/>
<rect x="744" y="149" width="3" height="1" fill="#000"/>
<rect x="33" y="143" width="3" height="1" fill="#000"/>
<rect x="744" y="143" width="3" height="1" fill="#000"/>
<rect x="33" y="137" width="3" height="1" fill="#000"/>
<rect x="744" y="137" width="3" height="1" fill="#000"/>
<rect x="31" y="131" width="5" height="1" fill="#000"/>
<rect x="744" y="131" width="5" height="1" fill="#000"/>
<rect x="33" y="125" width="3" height="1" fill="#000"/>
<rect x="744" y="125" width="3" height="1" fill="#000"/>
<rect x="33" y="119" width="3" height="1" fill="#000"/>
<rect x="744" y="119" width="3" height="1" fill="#000"/>
<rect x="33" y="113" width="3" height="1" fill="#000"/>
<rect x="33" y="108" width="3" height="1" fill="#000"/>
<rect x="31" y="102" width="5" height="1" fill="#000"/>
<rect x="31" y="346" width="5" height="1" fill="#000"/>
<rect x="744" y="346" width="5" height="1" fill="#000"/>
<rect x="33" y="587" width="3" height="1" fill="#000"/>
<rect x="744" y="587" width="3" height="1" fill="#000"/>
<rect x="33" y="575" width="3" height="1" fill="#000"/>
<rect x="744" y="575" width="3" height="1" fill="#000"/>
<rect x="31" y="563" width="5" height="1" fill="#000"/>
<rect x="744" y="563" width="5" height="1" fill="#000"/>
<rect x="33" y="552" width="3" height="1" fill="#000"/>
<rect x="744" y="552" width="3" height="1" fill="#000"/>
<rect x="33" y="540" width="3" height="1" fill="#000"/>
<rect x="744" y="540" width="3" height="1" fill="#000"/>
<rect x="33" y="528" width="3" height="1" fill="#000"/>
<rect x="744" y="528" width="3" height="1" fill="#000"/>
<rect x="33" y="516" width="3" height="1" fill="#000"/>
<rect x="744" y="516" width="3" height="1" fill="#000"/>
<rect x="31" y="504" width="5" height="1" fill="#000"/>
<rect x="744" y="504" width="5" height="1" fill="#000"/>
<rect x="33" y="492" width="3" height="1" fill="#000"/>
<rect x="744" y="492" width="3" height="1" fill="#000"/>
<rect x="33" y="480" width="3" height="1" fill="#000"/>
<rect x="744" y="480" width="3" height="1" fill="#000"/>
<rect x="33" y="468" width="3" height="1" fill="#000"/>
<rect x="744" y="468" width="3" height="1" fill="#000"/>
<rect x="33" y="456" width="3" height="1" fill="#000"/>
<rect x="744" y="456" width="3" height="1" fill="#000"/>
<rect x="31" y="445" width="5" height="1" fill="#000"/>
<rect x="744" y="445" width="5" height="1" fill="#000"/>
<rect x="33" y="433" width="3" height="1" fill="#000"/>
<rect x="744" y="433" width="3" height="1" fill="#000"/>
<rect x="33" y="421" width="3" height="1" fill="#000"/>
<rect x="744" y="421" width="3" height="1" fill="#000"/>
<rect x="33" y="409" width="3" height="1" fill="#000"/>
<rect x="744" y="409" width="3" height="1" fill="#000"/>
<rect x="33" y="397" width="3" height="1" fill="#000"/>
<rect x="744" y="397" width="3" height="1" fill="#000"/>
<rect x="31" y="385" width="5" height="1" fill="#000"/>
<rect x="744" y="385" width="5" height="1" fill="#000"/>
<rect x="33" y="373" width="3" height="1" fill="#000"/>
<rect x="744" y="373" width="3" height="1" fill="#000"/>
<rect x="33" y="361" width="3" height="1" fill="#000"/>
<rect x="744" y="361" width="3" height="1" fill="#000"/>
<rect x="73" y="599" width="1" height="3" fill="#000"/>
<rect x="189" y="599" width="1" height="3" fill="#000"/>
<rect x="248" y="599" width="1" height="3" fill="#000"/>
<rect x="363" y="599" width="1" height="3" fill="#000"/>
<rect x="420" y="599" width="1" height="3" fill="#000"/>
<rect x="535" y="599" width="1" height="3" fill="#000"/>
<rect x="593" y="599" width="1" height="3" fill="#000"/>
<rect x="707" y="599" width="1" height="3" fill="#000"/>
<rect x="131" y="599" width="1" height="5" fill="#000"/>
<rect x="307" y="599" width="1" height="5" fill="#000"/>
<rect x="477" y="599" width="1" height="5" fill="#000"/>
<rect x="649" y="599" width="1" height="5" fill="#000"/>
<polyline points="36.1,240.3 39.7,250.9 42.5,244.5 45.0,250.7 47.8,247.9 50.9,247.3 55.6,230.0 57.6,232.5 60.7,232.5 65.4,197.0 68.8,185.9 71.8,225.0 73.8,226.4 76.9,247.3 79.9,241.7 82.7,240.9 85.8,241.7 87.8,245.9 92.5,273.3 94.7,273.3 98.9,251.5 101.7,247.3 105.4,246.5 109.6,268.3 112.9,272.5 117.1,282.2 122.1,290.1 126.9,314.4 129.7,315.2 134.7,333.3 137.5,307.4 139.4,328.3 142.2,321.3 147.3,328.3 153.4,320.8 156.2,322.7 159.6,331.1 162.6,332.5 166.5,322.7 168.2,324.1 171.6,315.2 173.8,319.9 177.7,316.6 182.7,316.6 188.3,324.1 196.7,324.7 198.1,333.3 203.7,324.7 206.5,335.3 209.3,338.9 212.1,336.7 213.9,329.7 216.1,315.8 218.9,282.2 221.7,254.3 224.5,265.5 226.4,265.5 229.5,278.0 232.3,266.0 237.0,272.5 241.2,278.0 243.2,274.4 245.7,283.6 248.8,272.5 251.3,280.8 254.4,265.5 256.6,278.0 259.4,280.3 262.2,272.5 264.4,260.4 266.4,262.7 270.6,251.5 275.3,242.6 277.5,254.3 283.7,258.5 288.2,251.5 294.3,257.1 299.3,263.5 308.8,250.9 313.9,265.5 316.6,258.5 319.4,257.9 322.2,264.6 327.3,264.9 330.1,262.7 334.8,265.5 339.0,262.1 340.5,258.1 345.2,252.5 348.0,253.9 353.1,252.5 355.0,230.2 356.7,212.0 358.1,216.2 360.6,220.4 365.1,198.0 368.4,192.5 371.2,190.5 374.6,196.1 379.6,171.5 382.4,154.2 385.2,155.3 388.0,180.4 392.2,157.5 396.4,149.7 400.6,147.8 404.2,125.4 407.5,146.4 409.8,162.6 412.6,140.8 416.5,143.0 422.9,134.4 427.1,138.0 431.3,143.0 436.3,131.8 441.1,143.6 443.9,146.4 445.8,165.4 449.4,153.3 452.2,147.2 455.0,146.4 457.3,157.5 460.1,157.5 463.4,138.0 465.4,143.6 469.0,135.2 474.0,118.4 477.4,125.4 481.0,131.8 483.5,131.0 487.1,112.8 491.3,103.1 495.0,115.6 499.2,127.4 505.3,119.8 510.1,102.5 512.3,118.4 515.1,117.0 517.9,122.6 521.5,119.3 524.0,119.8 526.3,128.2 528.2,125.4 531.8,135.2 533.9,142.2 537.5,140.8 540.8,142.2 543.9,143.6 547.3,138.0 552.8,134.6 557.0,136.6 560.7,145.0 563.5,146.4 566.8,138.0 569.6,142.2 573.0,146.4 576.6,144.1 580.2,145.0 585.0,148.3 587.8,145.5 590.0,145.0 592.5,156.1 595.3,153.3 599.5,143.6 602.3,155.3 605.4,147.8 608.7,145.0 612.1,145.5 618.5,143.6 622.7,150.6 625.5,163.1 628.8,175.7 632.5,165.9 636.1,156.1 639.4,158.9 642.2,154.7 645.0,136.6 647.8,132.4 650.1,139.4 652.0,174.3 654.8,163.1 657.6,162.6 659.8,185.5 663.2,200.8 667.4,196.1 674.4,195.2 677.1,202.2 680.8,214.8 684.1,209.2 688.3,207.3 692.0,213.4 695.9,223.2 699.5,213.4 703.1,206.4 707.0,221.8 709.3,217.6 712.1,221.8 714.9,220.4 717.1,227.4 720.4,226.0 722.7,230.2 724.6,239.9" fill="none" stroke="#0000ff" stroke-width="1"/>
<polyline points="36.8,559.7 40.2,550.4 43.0,563.9 45.2,547.1 48.0,540.9 50.8,545.7 53.6,547.7 57.8,559.7 60.6,550.4 63.3,561.1 66.1,553.5 68.9,552.7 71.7,522.0 74.5,496.8 77.3,474.5 80.1,466.6 84.3,478.7 87.7,487.6 90.4,485.1 95.5,466.1 98.8,457.8 102.5,452.2 105.2,450.8 108.0,471.7 110.0,469.4 112.2,487.0 115.0,499.6 117.8,503.8 120.6,499.6 123.4,499.0 127.6,485.6 130.9,494.6 137.4,496.3 140.2,474.5 145.8,465.5 151.3,468.9 155.5,487.6 159.7,483.4 163.1,488.4 165.3,498.2 168.1,505.2 170.9,516.4 173.1,520.6 175.1,517.8 177.0,548.5 178.7,556.9 180.7,558.3 183.5,577.8 186.3,587.6 189.0,591.8 193.2,589.0 197.4,590.4 200.5,590.4 202.2,588.8 205.9,580.4 208.7,568.9 212.8,570.3 216.2,573.7 217.9,548.5 220.7,537.4 224.0,529.0 228.2,526.2 232.4,523.4 235.2,520.6 240.8,498.3 244.1,510.8 246.4,515.0 250.0,510.8 252.5,512.2 256.1,531.2 258.9,526.2 261.7,529.0 264.5,519.2 268.7,513.6 271.5,524.8 274.3,533.2 277.1,537.4 282.1,527.6 284.6,529.0 287.7,536.0 298.0,530.4 300.8,541.6 307.8,548.5 312.0,537.4 314.8,538.8 317.6,551.3 321.8,543.0 324.6,541.6 327.4,547.1 330.2,551.3 333.0,555.5 337.1,545.8 339.9,552.7 344.1,553.6 346.9,561.1 351.1,573.7 353.9,575.1 356.7,568.1 359.5,562.5 362.3,540.2 365.1,526.2 367.0,516.4 372.1,522.0 374.7,515.9 380.3,508.9 384.5,493.5 387.8,454.4 391.4,440.5 394.2,441.9 397.0,462.8 400.7,488.0 404.0,499.1 406.8,479.6 410.2,436.3 412.4,440.5 416.6,434.9 420.2,425.1 423.0,447.5 425.8,485.2 430.6,481.0 434.7,478.2 438.9,471.2 442.6,490.8 445.9,507.5 450.1,496.3 452.9,499.1 457.1,492.1 461.3,490.8 465.5,494.9 468.3,498.6 471.6,476.8 474.4,471.2 478.0,462.8 480.8,446.1 483.6,460.0 486.4,457.2 490.6,451.6 494.8,443.3 499.0,437.7 502.3,420.9 505.1,420.4 507.4,425.1 512.1,404.2 515.8,418.1 518.5,432.1 522.7,451.6 526.1,451.1 530.3,420.9 533.3,415.3 535.3,437.7 536.7,451.6 539.5,454.4 540.5,459.0 543.9,475.8 548.9,478.6 551.7,488.3 554.5,491.1 557.3,496.7 560.6,502.3 564.2,509.3 566.2,520.5 567.9,542.8 571.2,548.4 574.6,549.8 578.2,544.2 581.0,541.4 583.8,530.2 585.8,526.1 588.0,542.8 589.4,548.4 592.2,531.6 596.4,521.9 599.2,526.1 602.0,514.9 605.3,512.1 608.9,517.7 612.6,528.9 617.3,540.0 621.5,545.6 624.3,537.2 625.7,530.2 627.7,542.8 630.4,534.4 635.5,536.7 638.3,548.4 641.1,545.6 643.3,537.2 646.6,527.5 649.4,514.9 650.8,495.3 651.7,467.4 655.0,461.8 657.8,460.4 661.2,443.7 663.4,440.9 666.2,441.7 669.0,452.0 671.8,457.6 674.6,461.8 677.4,459.0 680.2,460.4 683.0,467.4 686.3,477.2 688.0,509.3 689.9,520.5 691.3,533.0 694.1,523.3 696.9,527.5 699.7,540.0 702.5,542.8 705.3,551.2 708.1,542.8 710.9,538.6 713.7,540.0 716.5,537.2 719.3,540.0 722.1,538.6 723.5,539.5" fill="none" stroke="#ff0000" stroke-width="1"/>
<polyline points="36.8,471.8 39.6,477.4 43.0,469.6 44.6,484.4 48.0,495.5 51.3,501.1 55.0,496.9 58.6,491.3 62.0,474.6 65.3,436.9 68.9,424.3 71.7,443.9 74.5,460.6 77.3,461.4 80.9,456.4 83.7,454.5 86.5,439.7 89.9,418.7 93.2,432.7 96.0,438.3 98.3,457.8 101.6,469.0 105.2,496.8 106.6,499.6 108.9,491.2 110.8,505.2 115.0,505.2 117.3,517.8 119.2,506.6 122.0,520.6 123.4,519.2 126.8,542.9 129.0,539.6 131.8,537.3 135.1,522.0 137.9,515.0 140.2,523.3 143.0,520.6 145.8,526.1 148.5,510.8 151.3,509.4 152.7,503.8 156.9,502.4 159.2,496.8 161.1,510.8 165.3,505.2 168.1,491.2 170.1,487.0 172.3,488.4 175.1,509.4 179.3,507.4 183.5,508.0 185.4,519.2 190.4,513.0 195.5,525.6 198.9,522.6 202.2,526.8 205.9,541.6 209.2,552.7 211.4,533.2 213.4,538.8 216.2,524.8 218.4,484.3 221.2,474.5 224.0,476.5 229.0,467.0 231.8,446.6 234.6,439.0 237.4,443.0 240.8,438.2 242.7,428.4 245.8,423.7 249.2,445.2 253.3,455.0 255.3,484.3 257.5,503.9 259.5,511.7 263.7,494.9 267.3,503.9 270.1,516.4 273.5,492.7 276.5,485.7 282.7,481.5 284.9,488.5 287.7,481.5 293.9,489.9 299.4,496.9 308.7,474.5 311.2,480.1 314.0,505.2 316.8,502.5 319.6,502.5 322.9,525.6 324.6,536.5 327.4,550.2 328.8,555.5 331.3,564.5 332.7,568.1 334.6,568.4 338.0,573.1 340.8,570.3 343.0,570.3 346.4,579.0 348.9,574.8 351.4,576.2 353.9,580.9 354.5,564.5 356.4,558.9 357.0,542.4 359.2,541.6 360.3,536.8 363.1,506.6 365.1,495.5 366.5,499.7 369.3,481.5 372.7,472.6 374.7,476.8 377.5,468.4 380.3,460.0 383.1,448.9 385.9,446.1 388.7,419.5 390.9,409.2 393.4,426.5 396.2,429.3 398.4,441.9 401.8,455.8 404.0,429.3 407.4,412.5 409.6,401.4 411.6,373.4 413.8,358.1 416.6,355.3 419.9,366.4 422.7,356.1 425.8,367.8 429.2,381.8 432.5,400.0 436.1,397.2 438.9,401.4 441.7,429.3 445.4,450.2 447.3,465.6 449.3,488.0 451.5,501.9 454.3,515.9 457.1,524.3 459.3,510.3 462.7,497.7 466.9,482.4 470.5,472.6 474.4,471.2 478.0,475.4 480.8,478.2 483.6,468.4 487.3,450.2 490.6,429.3 494.8,425.1 499.0,421.5 500.9,451.6 503.2,468.4 506.0,482.4 508.8,472.6 511.6,485.2 514.4,499.1 517.1,501.9 519.9,488.0 522.7,476.8 526.4,503.3 528.1,522.5 530.6,528.5 534.0,514.2 535.6,520.9 538.1,522.1 541.5,510.9 544.0,504.2 546.5,512.5 549.0,505.8 552.4,495.8 554.9,489.9 556.1,495.8 559.1,507.5 560.8,512.5 564.1,515.9 565.8,510.0 568.0,508.3 570.0,520.9 572.5,534.3 576.7,536.0 579.2,546.0 582.4,559.6 585.2,572.1 588.0,581.9 590.8,586.1 593.6,593.1 596.4,594.5 599.2,584.7 602.0,583.3 605.3,573.5 608.1,583.3 610.3,576.3 613.7,573.5 617.3,570.8 621.5,569.4 625.7,556.8 629.9,559.6 634.1,563.8 636.9,556.8 639.7,552.6 642.5,548.4 645.2,526.1 648.0,517.7 650.0,514.9 651.7,521.9 653.6,507.9 656.4,505.1 659.2,502.3 663.4,495.3 667.6,485.6 670.9,480.0 674.0,487.0 677.4,489.7 679.3,491.1 681.0,509.3 684.4,517.7 687.1,521.9 688.5,510.7 691.3,517.7 694.1,526.1 697.5,533.0 699.7,540.0 702.5,537.2 705.3,542.8 708.1,547.0 710.9,556.8 713.7,569.4 716.5,575.5 723.5,575.5" fill="none" stroke="#0000ff" stroke-width="1"/>
</g>
<g>
<polygon points="95.5,230.3 105.5,230.3 100.5,239.8" fill="#cc0000" stroke="#000" stroke-width="1"/>
<polygon points="264.7,242.3 274.7,242.3 269.7,251.8" fill="#cc0000" stroke="#000" stroke-width="1"/>
<polygon points="349.0,236.5 359.0,236.5 354.0,246.0" fill="#cc0000" stroke="#000" stroke-width="1"/>
<polygon points="388.5,136.3 398.5,136.3 393.5,145.8" fill="#cc0000" stroke="#000" stroke-width="1"/>
<polygon points="446.7,130.2 456.7,130.2 451.7,139.7" fill="#cc0000" stroke="#000" stroke-width="1"/>
<polygon points="459.8,127.4 469.8,127.4 464.8,136.9" fill="#cc0000" stroke="#000" stroke-width="1"/>
<polygon points="471.0,108.7 481.0,108.7 476.0,118.2" fill="#cc0000" stroke="#000" stroke-width="1"/>
<polygon points="497.0,107.3 507.0,107.3 502.0,116.8" fill="#cc0000" stroke="#000" stroke-width="1"/>
<polygon points="554.8,120.4 564.8,120.4 559.8,129.9" fill="#cc0000" stroke="#000" stroke-width="1"/>
<polygon points="575.8,128.2 585.8,128.2 580.8,137.7" fill="#cc0000" stroke="#000" stroke-width="1"/>
<polygon points="644.8,122.4 654.8,122.4 649.8,131.9" fill="#cc0000" stroke="#000" stroke-width="1"/>
<polygon points="636.7,145.0 646.7,145.0 641.7,154.5" fill="#cc0000" stroke="#000" stroke-width="1"/>
<polygon points="689.7,206.2 699.7,206.2 694.7,215.7" fill="#cc0000" stroke="#000" stroke-width="1"/>
<polygon points="702.9,205.6 712.9,205.6 707.9,215.1" fill="#cc0000" stroke="#000" stroke-width="1"/>
<polygon points="163.5,341.3 173.5,341.3 168.5,331.8" fill="#109410" stroke="#000" stroke-width="1"/>
<polygon points="267.0,264.5 277.0,264.5 272.0,255.0" fill="#109410" stroke="#000" stroke-width="1"/>
<polygon points="351.8,228.1 361.8,228.1 356.8,218.6" fill="#109410" stroke="#000" stroke-width="1"/>
<polygon points="390.8,167.7 400.8,167.7 395.8,158.2" fill="#109410" stroke="#000" stroke-width="1"/>
<polygon points="456.2,154.0 466.2,154.0 461.2,144.5" fill="#109410" stroke="#000" stroke-width="1"/>
<polygon points="462.5,154.0 472.5,154.0 467.5,144.5" fill="#109410" stroke="#000" stroke-width="1"/>
<polygon points="480.8,128.5 490.8,128.5 485.8,119.0" fill="#109410" stroke="#000" stroke-width="1"/>
<polygon points="550.1,151.8 560.1,151.8 555.1,142.3" fill="#109410" stroke="#000" stroke-width="1"/>
<polygon points="559.6,162.9 569.6,162.9 564.6,153.4" fill="#109410" stroke="#000" stroke-width="1"/>
<polygon points="638.6,162.4 648.6,162.4 643.6,152.9" fill="#109410" stroke="#000" stroke-width="1"/>
<polygon points="633.9,174.9 643.9,174.9 638.9,165.4" fill="#109410" stroke="#000" stroke-width="1"/>
<polygon points="683.9,224.4 693.9,224.4 688.9,214.9" fill="#109410" stroke="#000" stroke-width="1"/>
<polygon points="694.5,230.5 704.5,230.5 699.5,221.0" fill="#109410" stroke="#000" stroke-width="1"/>
<polygon points="96.1,446.4 106.1,446.4 101.1,455.9" fill="#cc0000" stroke="#000" stroke-width="1"/>
<polygon points="265.1,503.0 275.1,503.0 270.1,512.5" fill="#cc0000" stroke="#000" stroke-width="1"/>
<polygon points="348.9,563.7 358.9,563.7 353.9,573.2" fill="#cc0000" stroke="#000" stroke-width="1"/>
<polygon points="388.7,425.7 398.7,425.7 393.7,435.2" fill="#cc0000" stroke="#000" stroke-width="1"/>
<polygon points="446.5,487.1 456.5,487.1 451.5,496.6" fill="#cc0000" stroke="#000" stroke-width="1"/>
<polygon points="459.9,469.0 469.9,469.0 464.9,478.5" fill="#cc0000" stroke="#000" stroke-width="1"/>
<polygon points="470.2,457.3 480.2,457.3 475.2,466.8" fill="#cc0000" stroke="#000" stroke-width="1"/>
<polygon points="496.8,438.3 506.8,438.3 501.8,447.8" fill="#cc0000" stroke="#000" stroke-width="1"/>
<polygon points="554.9,492.7 564.9,492.7 559.9,502.2" fill="#cc0000" stroke="#000" stroke-width="1"/>
<polygon points="576.0,535.6 586.0,535.6 581.0,545.1" fill="#cc0000" stroke="#000" stroke-width="1"/>
<polygon points="645.0,500.1 655.0,500.1 650.0,509.6" fill="#cc0000" stroke="#000" stroke-width="1"/>
<polygon points="636.6,535.6 646.6,535.6 641.6,545.1" fill="#cc0000" stroke="#000" stroke-width="1"/>
<polygon points="689.7,512.1 699.7,512.1 694.7,521.6" fill="#cc0000" stroke="#000" stroke-width="1"/>
<polygon points="703.1,530.0 713.1,530.0 708.1,539.5" fill="#cc0000" stroke="#000" stroke-width="1"/>
<polygon points="163.9,504.3 173.9,504.3 168.9,494.8" fill="#109410" stroke="#000" stroke-width="1"/>
<polygon points="266.5,525.2 276.5,525.2 271.5,515.7" fill="#109410" stroke="#000" stroke-width="1"/>
<polygon points="351.7,558.1 361.7,558.1 356.7,548.6" fill="#109410" stroke="#000" stroke-width="1"/>
<polygon points="390.6,444.5 400.6,444.5 395.6,435.0" fill="#109410" stroke="#000" stroke-width="1"/>
<polygon points="456.3,505.9 466.3,505.9 461.3,496.4" fill="#109410" stroke="#000" stroke-width="1"/>
<polygon points="462.7,494.8 472.7,494.8 467.7,485.3" fill="#109410" stroke="#000" stroke-width="1"/>
<polygon points="480.6,464.9 490.6,464.9 485.6,455.4" fill="#109410" stroke="#000" stroke-width="1"/>
<polygon points="550.0,505.5 560.0,505.5 555.0,496.0" fill="#109410" stroke="#000" stroke-width="1"/>
<polygon points="560.1,533.4 570.1,533.4 565.1,523.9" fill="#109410" stroke="#000" stroke-width="1"/>
<polygon points="638.9,551.0 648.9,551.0 643.9,541.5" fill="#109410" stroke="#000" stroke-width="1"/>
<polygon points="633.8,563.0 643.8,563.0 638.8,553.5" fill="#109410" stroke="#000" stroke-width="1"/>
<polygon points="683.5,526.7 693.5,526.7 688.5,517.2" fill="#109410" stroke="#000" stroke-width="1"/>
<polygon points="694.7,559.4 704.7,559.4 699.7,549.9" fill="#109410" stroke="#000" stroke-width="1"/>
</g>
<g shape-rendering="crispEdges">
</g>
<rect x="323.5" y="248.5" width="4" height="2" fill="#ffff00" stroke="#000"/><rect x="323.5" y="253.5" width="7" height="2" fill="#ffff00" stroke="#000"/><rect x="346.5" y="262.5" width="7" height="2" fill="#0000ff" stroke="#000"/><rect x="346.5" y="267.5" width="7" height="2" fill="#0000ff" stroke="#000"/>
<rect x="323.5" y="535.5" width="7" height="2" fill="#ffff00" stroke="#000"/><rect x="323.5" y="540.5" width="7" height="2" fill="#ffff00" stroke="#000"/><rect x="346.5" y="582.5" width="7" height="2" fill="#0000ff" stroke="#000"/><rect x="346.5" y="587.5" width="7" height="2" fill="#0000ff" stroke="#000"/>
</g>
<polygon points="325.0,245.5 335.0,245.5 330.0,255.0" fill="#cc0000" stroke="#000" stroke-width="1"/>
<polygon points="324.8,543.5 334.8,543.5 329.8,553.0" fill="#cc0000" stroke="#000" stroke-width="1"/>
<g shape-rendering="crispEdges">
<rect x="37.5" y="98.5" width="147" height="17" fill="#fff" stroke="#000"/>
<rect x="42" y="107" width="12" height="1" fill="#0000ff"/>
<rect x="37.5" y="351.5" width="222" height="17" fill="#fff" stroke="#000"/>
<rect x="42" y="360" width="12" height="1" fill="#0000ff"/>
<rect x="747.5" y="96.5" width="14" height="15" fill="#fff" stroke="#000"/>
<rect x="22.5" y="349.5" width="11" height="15" fill="#fff" stroke="#000"/>
<rect x="746.5" y="349.5" width="11" height="15" fill="#fff" stroke="#000"/>
<rect x="24" y="361" width="7" height="1" fill="#000"/>
<rect x="749" y="361" width="6" height="1" fill="#000"/>
<rect x="8.5" y="81.5" width="14" height="14" fill="#fff" stroke="#c0c0c0"/>
<polygon points="12,85 20,85 16,89" fill="#a0a0a0"/>
<rect x="12" y="91" width="8" height="1" fill="#a0a0a0"/>
</g>
<g font-family="Liberation Sans, Arial, sans-serif" font-size="11px" fill="#000">
<text x="58" y="111" textLength="123.5" lengthAdjust="spacingAndGlyphs">Close (*) 8,34 EUR (10.8.)</text>
<text x="57.5" y="364" textLength="199" lengthAdjust="spacingAndGlyphs">Notis %V14 (*) 0,04 -V/0,0721 +V (10.8.)</text>
<text x="749" y="108" font-size="11px">%</text>
<text x="24.5" y="360" font-weight="bold" font-size="11px">a</text>
<text x="749" y="359.5" font-size="10px">=</text>
<text x="26.5" y="106" text-anchor="end" font-size="10.6px">10,5</text>
<text x="26.5" y="135" text-anchor="end" font-size="10.6px">10,0</text>
<text x="751.5" y="135">20%</text>
<text x="26.5" y="166" text-anchor="end" font-size="10.6px">9,5</text>
<text x="751.5" y="166">14%</text>
<text x="26.5" y="199" text-anchor="end" font-size="10.6px">9,0</text>
<text x="751.5" y="199">8%</text>
<text x="26.5" y="233" text-anchor="end" font-size="10.6px">8,5</text>
<text x="751.5" y="233">2%</text>
<text x="26.5" y="269" text-anchor="end" font-size="10.6px">8,0</text>
<text x="751.5" y="269">-4%</text>
<text x="26.5" y="308" text-anchor="end" font-size="10.6px">7,5</text>
<text x="751.5" y="308">-10%</text>
<text x="26.5" y="389" text-anchor="end">0,20</text>
<text x="752" y="389">0,20</text>
<text x="26.5" y="449" text-anchor="end">0,15</text>
<text x="752" y="449">0,15</text>
<text x="26.5" y="508" text-anchor="end">0,10</text>
<text x="752" y="508">0,10</text>
<text x="26.5" y="567" text-anchor="end">0,05</text>
<text x="752" y="567">0,05</text>
<text x="129.5" y="614.5" font-size="10.6px">Okt 03</text>
<text x="305.5" y="614.5" font-size="10.6px">Jan 04</text>
<text x="475.5" y="614.5" font-size="10.6px">Apr 04</text>
<text x="647.5" y="614.5" font-size="10.6px">Jul 04</text>
</g>
<text x="392" y="91.5" text-anchor="middle" font-family="Liberation Sans, Arial, sans-serif" font-size="13px" font-weight="bold" textLength="336" lengthAdjust="spacingAndGlyphs">Klöckner Werke (X) / XETRA vom 12.08.03 bis 10.08.04</text>
<g shape-rendering="crispEdges">
<!-- title bar icon -->
<rect x="6" y="5" width="15" height="15" fill="#fff"/>
<rect x="10" y="5" width="1" height="13" fill="#d8d8d8"/><rect x="14" y="5" width="1" height="13" fill="#d8d8d8"/><rect x="18" y="5" width="1" height="13" fill="#d8d8d8"/><rect x="8" y="8" width="13" height="1" fill="#d8d8d8"/><rect x="8" y="12" width="13" height="1" fill="#d8d8d8"/><rect x="8" y="16" width="13" height="1" fill="#d8d8d8"/>
<line x1="7.5" y1="5" x2="7.5" y2="19" stroke="#000" stroke-dasharray="2,1"/><line x1="7" y1="18.5" x2="21" y2="18.5" stroke="#000" stroke-width="1" stroke-dasharray="3,1"/>
<rect x="10" y="6" width="3" height="1" fill="#000"/>
<!-- title buttons glyphs -->
<rect x="761" y="16" width="6" height="2" fill="#000"/>
<rect x="776.5" y="8.5" width="8" height="8" fill="none" stroke="#000"/><rect x="776" y="8" width="9" height="2" fill="#000"/>
<!-- size grip -->
</g>
<polyline points="8,13.3 11.5,15.7 13.5,11.5 16,9 19,11.7 21,11.7" fill="none" stroke="#ff0000" stroke-width="1.3"/>
<polyline points="8,16 11.5,12 13.5,14.2 21,7" fill="none" stroke="#0000ff" stroke-width="1.2"/><polyline points="8,15 11.5,11 13.5,13.2 21,6" fill="none" stroke="#00e8ff" stroke-width="1.1"/>
<path d="M795,9 L802,16 M802,9 L795,16" stroke="#000" stroke-width="1.7" fill="none"/>
<g stroke-width="1.1"><path d="M796,639.5 L808.5,627 M800,639.5 L808.5,631 M804,639.5 L808.5,635" stroke="#fff"/><path d="M797.3,639.5 L808.5,628.3 M798.3,639.5 L808.5,629.3 M801.3,639.5 L808.5,632.3 M802.3,639.5 L808.5,633.3 M805.3,639.5 L808.5,636.3 M806.3,639.5 L808.5,637.3" stroke="#808080"/></g>
</svg>
</body></html>
